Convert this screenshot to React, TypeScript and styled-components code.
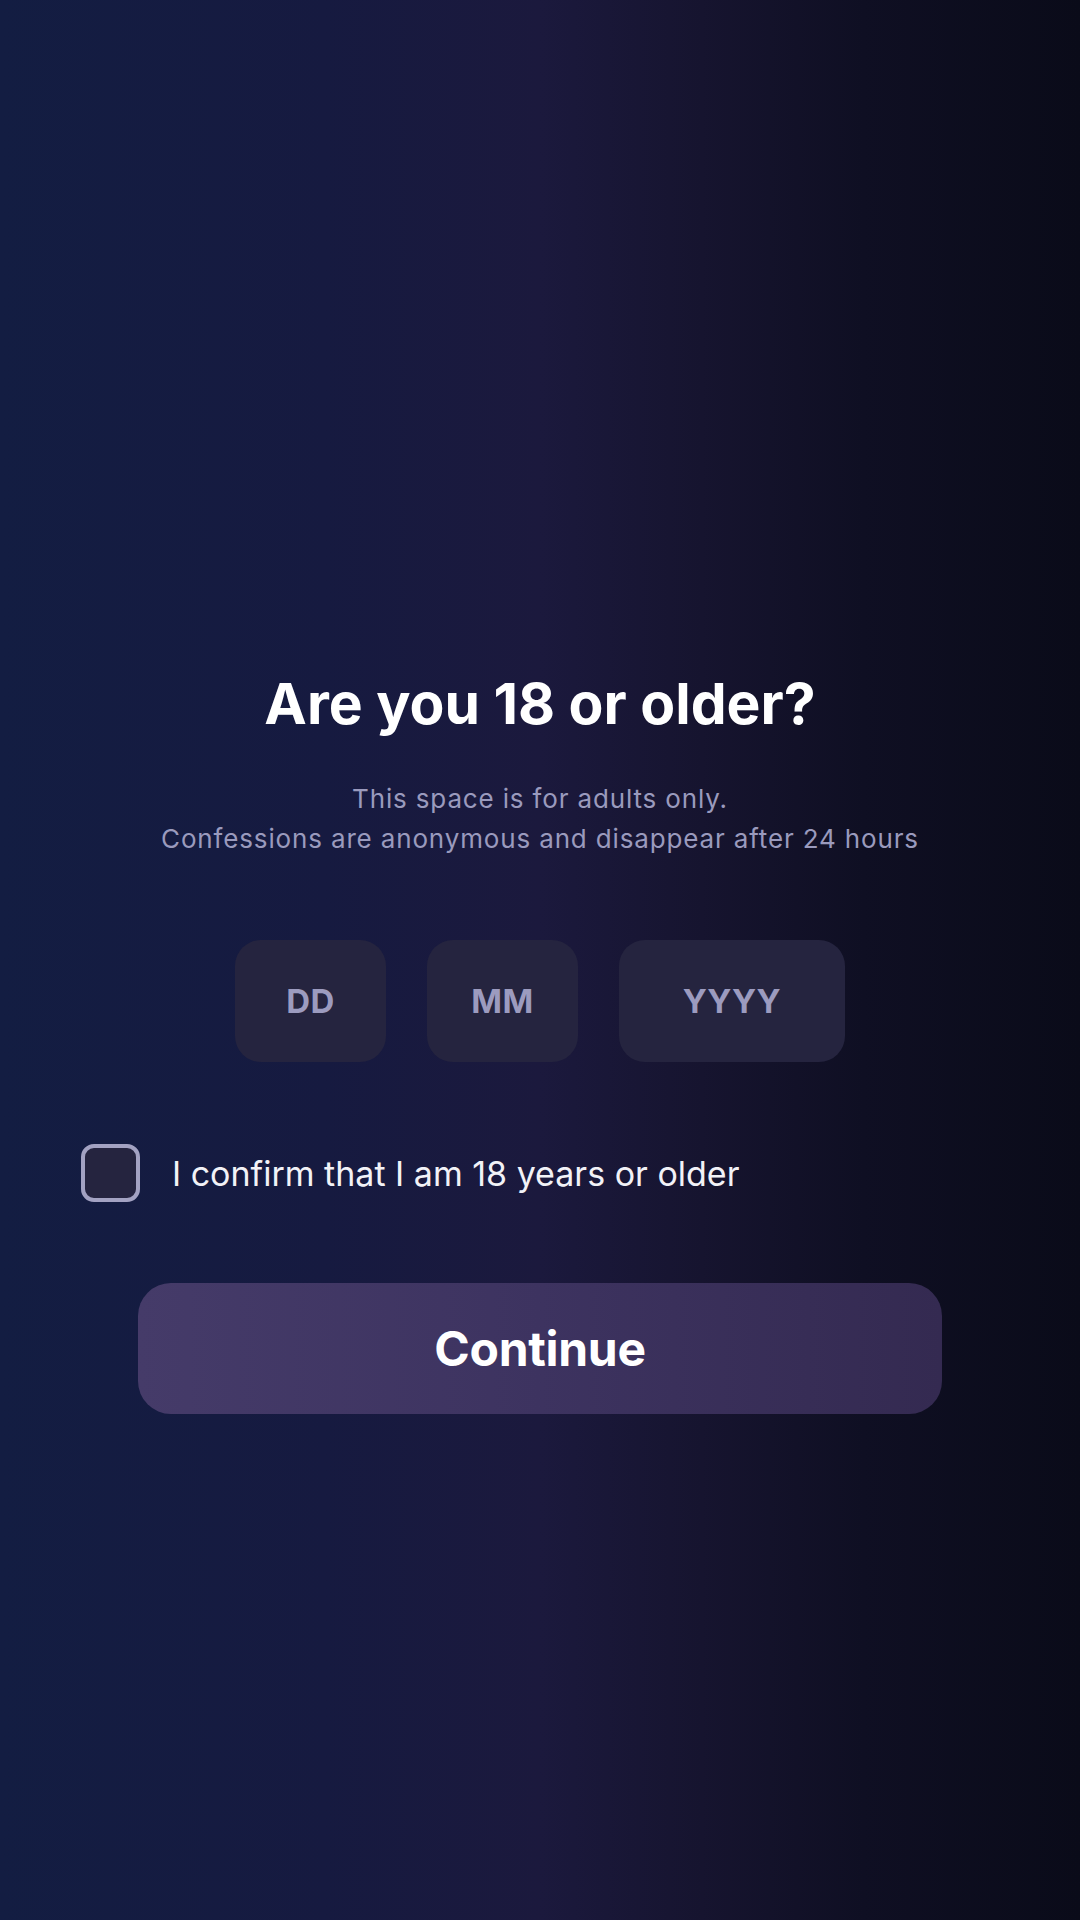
import React from 'react';
import styled, { createGlobalStyle } from 'styled-components';

const GlobalStyle = createGlobalStyle`
    html, body {
        margin: 0;
        padding: 0;
        background: #0b0c1b;
    }
    * {
        box-sizing: border-box;
    }
`;

const colors = {
    text: '#ffffff',
    muted: '#9a9abd',
    field: '#25243f',
    fieldText: '#9c9bbf',
    checkBorder: '#a3a2c2',
};

const StyledPage = styled.div`
    display: flex;
    flex-direction: column;
    align-items: center;
    width: 1080px;
    min-height: 1920px;
    padding: 670px 81px 0;
    background: linear-gradient(
        90deg,
        #131d42 0%,
        #161a40 30%,
        #1b193d 50%,
        #16142f 65%,
        #0f0f23 80%,
        #0a0b19 100%
    );
    font-family: Inter, 'Noto Sans', 'Liberation Sans', sans-serif;
`;

const StyledTitle = styled.h1`
    margin: 0;
    font-size: 57px;
    line-height: 68px;
    font-weight: 700;
    color: ${colors.text};
    text-align: center;
`;

const StyledSubtitle = styled.p`
    margin: 41px 0 0;
    font-size: 26px;
    line-height: 40px;
    font-weight: 400;
    letter-spacing: 0.85px;
    color: ${colors.muted};
    text-align: center;
`;

const StyledDateRow = styled.div`
    display: flex;
    gap: 41px;
    margin-top: 81px;
`;

const StyledDateField = styled.div<{ $wide?: boolean }>`
    display: flex;
    align-items: center;
    justify-content: center;
    width: ${({ $wide }) => ($wide ? '226px' : '151px')};
    height: 122px;
    border-radius: 26px;
    background: ${colors.field};
    color: ${colors.fieldText};
    font-size: 33px;
    font-weight: 700;
    letter-spacing: 0.5px;
`;

const StyledCheckRow = styled.label`
    display: flex;
    align-items: center;
    gap: 32px;
    align-self: stretch;
    margin-top: 82px;
    cursor: pointer;
`;

const StyledCheckbox = styled.span`
    width: 59px;
    height: 58px;
    border-radius: 13px;
    border: 4px solid ${colors.checkBorder};
    background: ${colors.field};
    flex-shrink: 0;
`;

const StyledCheckLabel = styled.span`
    font-size: 34px;
    font-weight: 400;
    color: #f2f2f7;
`;

const StyledButton = styled.button`
    width: 804px;
    height: 131px;
    margin-top: 81px;
    border: none;
    border-radius: 33px;
    background: linear-gradient(90deg, #453b69 0%, #3d3360 50%, #342a51 100%);
    color: ${colors.text};
    font-family: inherit;
    font-size: 48px;
    font-weight: 700;
    letter-spacing: -0.3px;
    cursor: pointer;
`;

export default function App() {
    return (
        <>
            <GlobalStyle />
            <StyledPage>
                <StyledTitle>Are you 18 or older?</StyledTitle>
                <StyledSubtitle>
                    This space is for adults only.
                    <br />
                    Confessions are anonymous and disappear after 24 hours
                </StyledSubtitle>
                <StyledDateRow>
                    <StyledDateField>DD</StyledDateField>
                    <StyledDateField>MM</StyledDateField>
                    <StyledDateField $wide>YYYY</StyledDateField>
                </StyledDateRow>
                <StyledCheckRow>
                    <StyledCheckbox />
                    <StyledCheckLabel>I confirm that I am 18 years or older</StyledCheckLabel>
                </StyledCheckRow>
                <StyledButton>Continue</StyledButton>
            </StyledPage>
        </>
    );
}
